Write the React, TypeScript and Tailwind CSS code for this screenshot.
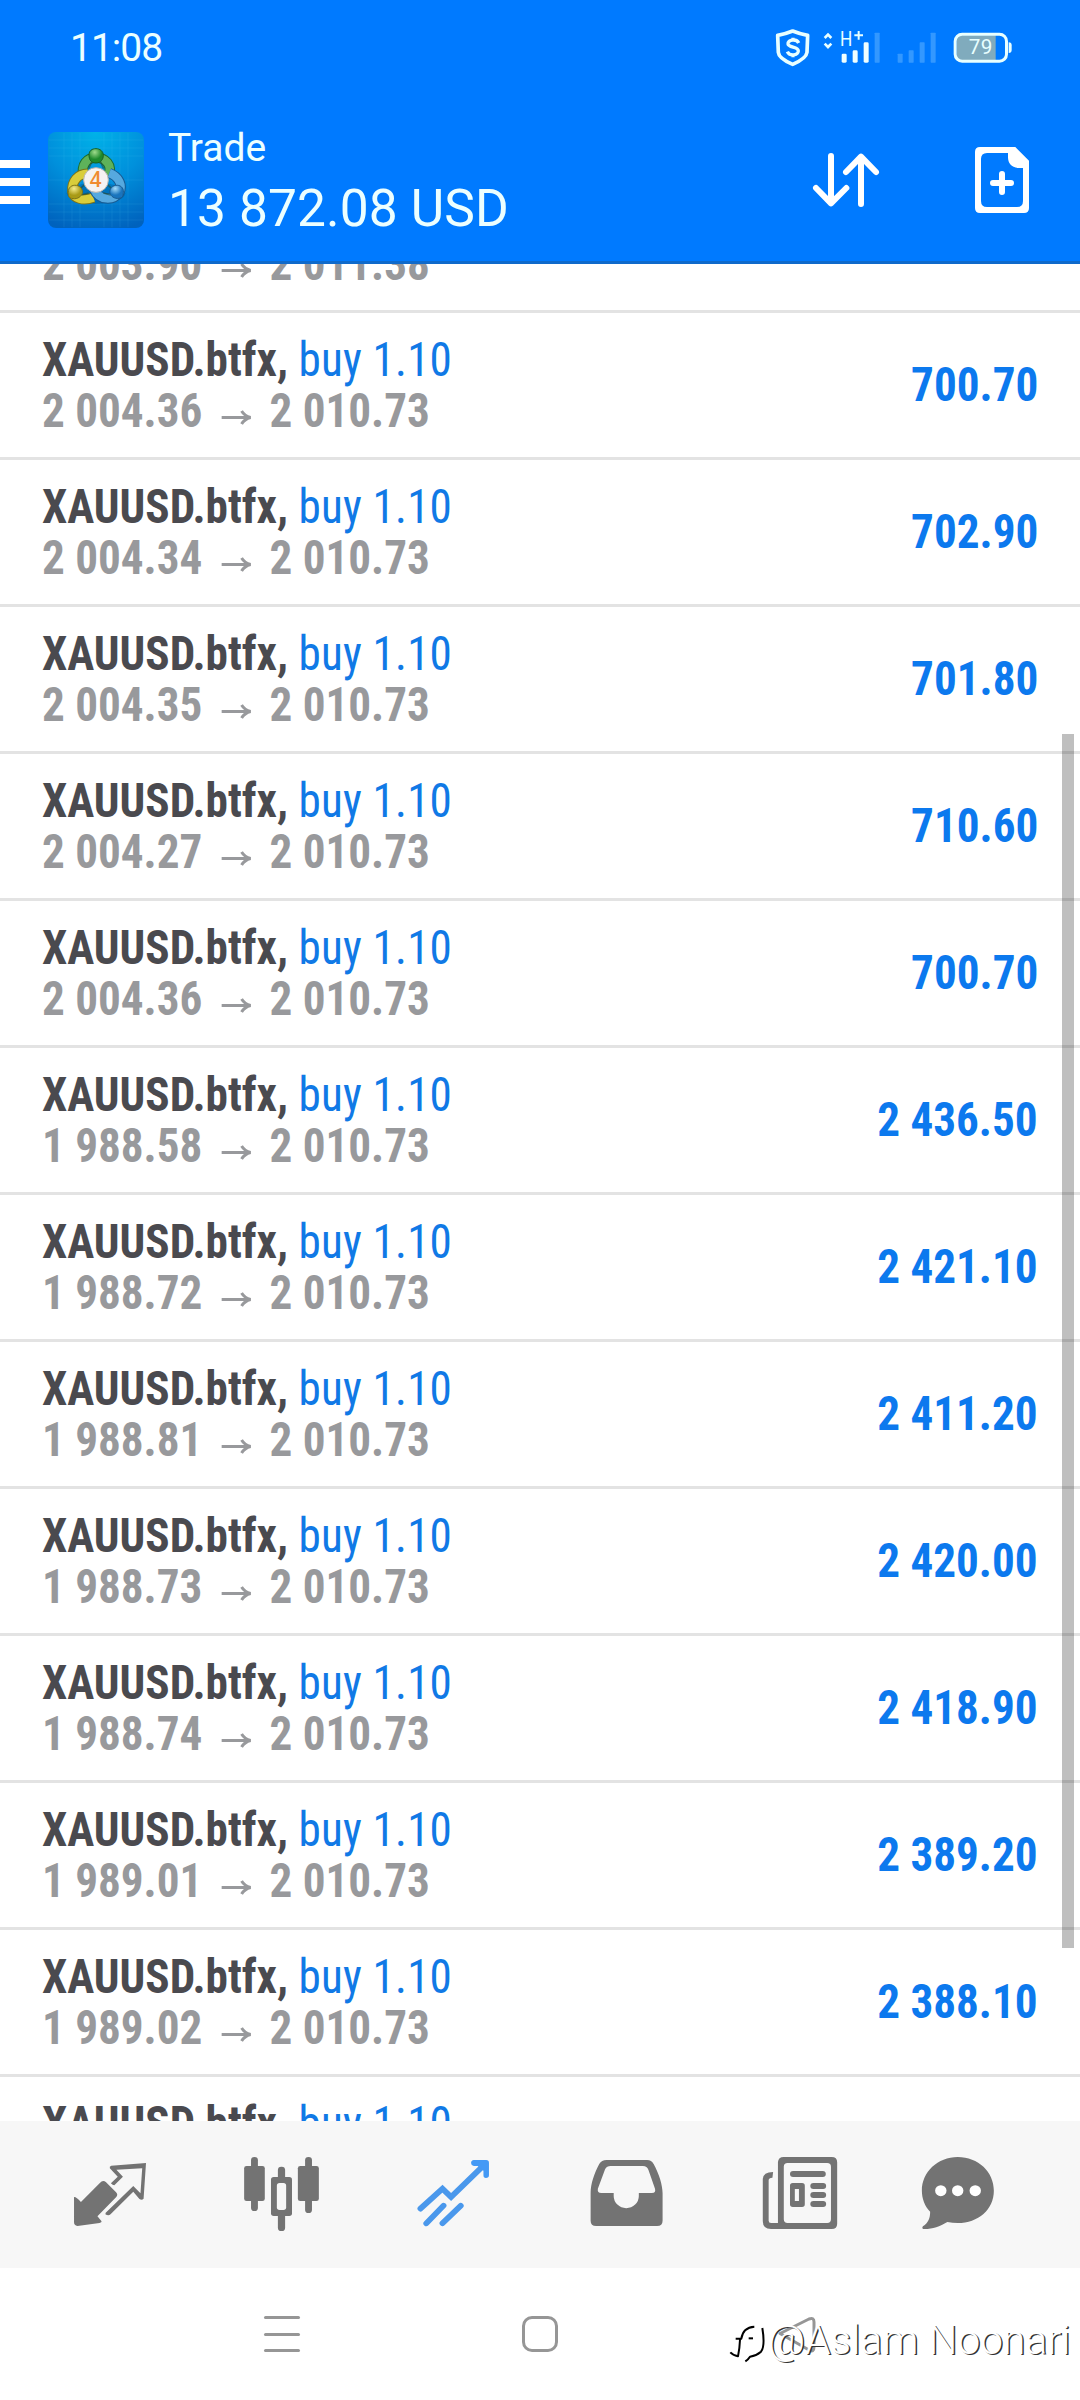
import React from "react";

const trades = [
  ["2 004.36", "700.70"],
  ["2 004.34", "702.90"],
  ["2 004.35", "701.80"],
  ["2 004.27", "710.60"],
  ["2 004.36", "700.70"],
  ["1 988.58", "2 436.50"],
  ["1 988.72", "2 421.10"],
  ["1 988.81", "2 411.20"],
  ["1 988.73", "2 420.00"],
  ["1 988.74", "2 418.90"],
  ["1 989.01", "2 389.20"],
  ["1 989.02", "2 388.10"],
];

function Row({ open, close, profit }: { open?: string; close?: string; profit?: string }) {
  return (
    <div className="flex h-[147px] shrink-0 items-center justify-between border-b-[3px] border-[#e3e3e3] pr-[42px] pl-[42px] font-['Roboto_Condensed',Roboto,sans-serif] text-[48px] whitespace-nowrap">
      <div className="origin-left scale-x-[0.94] leading-[51px]">
        <div className="flex h-[51px]">
          {profit !== undefined && (
            <>
              <span className="w-[273px] font-bold text-[#4a4a4f]">XAUUSD.btfx,</span>
              <span className="tracking-[0.2px] text-[#1079e6]">buy 1.10</span>
            </>
          )}
        </div>
        <div className="flex h-[51px] font-bold text-[#98999c]">
          {open && (
            <>
              <span className="w-[189px]">{open}</span>
              <svg className="mt-[24px] mr-[18px] h-[18px] w-[35px]" viewBox="0 0 33 18" preserveAspectRatio="none" fill="none" stroke="#98999c" strokeWidth="3">
                <path d="M2 8.5h28M22 2q3 5 9 6.500q-6 1.500-9 6.500" />
              </svg>
              <span>{close}</span>
            </>
          )}
        </div>
      </div>
      <div className="origin-right scale-x-[0.94] font-bold text-[#0c79ee]">{profit}</div>
    </div>
  );
}

function Logo() {
  return (
    <svg className="h-[112px] w-[112px] shrink-0" viewBox="0 0 336 336">
      <defs>
        <radialGradient id="tile" cx="50%" cy="0%" r="105%">
          <stop offset="0" stopColor="#00b2e8" />
          <stop offset=".5" stopColor="#0090dc" />
          <stop offset="1" stopColor="#0062bd" />
        </radialGradient>
        <radialGradient id="green" cx="40%" cy="25%"><stop offset="0" stopColor="#9edb8b" /><stop offset="1" stopColor="#1e8a2c" /></radialGradient>
        <radialGradient id="gold" cx="40%" cy="25%"><stop offset="0" stopColor="#f6ec8c" /><stop offset="1" stopColor="#a89a16" /></radialGradient>
        <radialGradient id="azure" cx="40%" cy="25%"><stop offset="0" stopColor="#a5dcfa" /><stop offset="1" stopColor="#1a74bd" /></radialGradient>
      </defs>
      <rect x="24" y="24" width="288" height="288" rx="24" fill="url(#tile)" />
      <path d="M72 26v284M96 26v284M120 26v284M192 26v284M216 26v284M240 26v284M264 26v284M26 48h284M26 72h284M26 96h284M26 168h284M26 240h284M26 264h284M26 288h284" stroke="#5fd0f5" strokeOpacity=".16" strokeWidth="2" />
      <ellipse cx="168" cy="208" rx="88" ry="32" fill="#004a86" opacity=".35" />
      <g fill="none">
        <path d="M131 160C121 120 142 101 168 101S222 122 203 158" stroke="#1c6b2c" strokeWidth="31" />
        <path d="M131 160C121 120 142 101 168 101S222 122 203 158" stroke="#5eb25a" strokeWidth="25" />
        <path d="M143 149C114 149 94 172 97 203C101 223 130 233 160 221" stroke="#7c7418" strokeWidth="31" />
        <path d="M143 149C114 149 94 172 97 203C101 223 130 233 160 221" stroke="#d9cd3b" strokeWidth="25" />
        <path d="M208 147C239 159 248 185 238 205C220 231 178 231 162 196" stroke="#175a91" strokeWidth="31" />
        <path d="M208 147C239 159 248 185 238 205C220 231 178 231 162 196" stroke="#56a9df" strokeWidth="25" />
      </g>
      <path d="M156 112l-10 22M181 112l10 22M118 196l18-16M124 213l22-6M218 196l-18-16M212 213l-22-6" stroke="#234f35" strokeOpacity=".6" strokeWidth="5" />
      <path d="M147 93C147 80 156 74 168 74S190 82 190 94S182 117 168 117S147 108 147 93Z" fill="url(#green)" stroke="#175f25" strokeWidth="3" />
      <path d="M85 205C84 190 96 182 109 184S130 199 127 208S113 226 99 224S85 215 85 205Z" fill="url(#gold)" stroke="#7c7418" strokeWidth="3" />
      <path d="M250 205C252 191 240 182 227 184S207 199 210 208S223 225 237 223S249 214 250 205Z" fill="url(#azure)" stroke="#175a91" strokeWidth="3" />
      <circle cx="168" cy="168" r="37" fill="#f5f2f2" stroke="#bcb6b0" strokeWidth="3" />
      <text x="167" y="189" textAnchor="middle" fill="#f08b30" fontFamily="Open Sans" fontWeight="600" fontSize="62">4</text>
    </svg>
  );
}

function StatusIcons() {
  return (
    <svg className="h-[40px] w-[250px]" viewBox="97 85 750 120" fill="none">
      <path d="M156 94Q178 103 201 107L199 158Q197 176 156 194Q114 176 113 158L111 107Q134 103 156 94Z" stroke="#e8ffff" strokeWidth="11" strokeLinejoin="round" />
      <path d="M174 130C168 116 140 120 142 133C144 145 173 140 173 154C172 168 146 170 140 156M157 114v10M157 164v9" stroke="#e8ffff" strokeWidth="10" />
      <path d="M252 115l10-10 10 10M252 132l10 10 10-10" stroke="#e8ffff" strokeWidth="8" />
      <text x="298" y="140" fill="#e8ffff" fontFamily="Roboto" fontSize="60" textLength="37" lengthAdjust="spacingAndGlyphs">H</text>
      <path d="M341 107h26M354 94v26" stroke="#e8ffff" strokeWidth="6" />
      <g fill="#f0ffff">
        <rect x="303" y="162" width="15" height="27" rx="4" />
        <rect x="336" y="152" width="15" height="37" rx="4" />
        <rect x="369" y="128" width="15" height="61" rx="4" />
      </g>
      <g fill="#3398ff">
        <rect x="402" y="99" width="15" height="90" rx="2" />
        <rect x="471" y="162" width="15" height="27" rx="2" />
        <rect x="504" y="152" width="15" height="37" rx="2" />
        <rect x="537" y="128" width="15" height="61" rx="2" />
        <rect x="570" y="99" width="15" height="90" rx="2" />
      </g>
      <path d="M664 107h101v74H664q-16 0-16-16v-42q0-16 16-16Z" fill="#80abbd" />
      <rect x="643.500" y="103.500" width="154" height="81" rx="21" stroke="#e8ffff" strokeWidth="9" />
      <path d="M804 128q9 0 9 9v14q0 9-9 9z" fill="#e8ffff" />
      <text x="684" y="164" fill="#e8ffff" fontFamily="Roboto" fontSize="62" textLength="71">79</text>
    </svg>
  );
}

function SortIcon() {
  return (
    <svg className="h-[60px] w-[70px]" viewBox="213 450 210 180" fill="none" stroke="#fff" strokeWidth="18" strokeLinecap="round" strokeLinejoin="round">
      <path d="M273 468v142M228 564l45 46 46-46M363 612V470M318 516l45-46 45 46" />
    </svg>
  );
}

function NewOrderIcon() {
  return (
    <svg className="h-[70px] w-[60px]" viewBox="696 435 180 210" fill="none">
      <path fillRule="evenodd" fill="#fff" d="M720 441H826L867 482V624q0 15-15 15H720q-15 0-15-15V456q0-15 15-15ZM804 459H741q-18 0-18 18V603q0 18 18 18h90q18 0 18-18V504H837C815 504 804 490 804 472Z" />
      <path d="M759 549h54M786 522v54" stroke="#fff" strokeWidth="18" strokeLinecap="round" />
    </svg>
  );
}

function Tab({ box, children }: { box: string; children: React.ReactNode }) {
  return (
    <svg className="h-[147px] w-[172px] shrink-0" viewBox={box} preserveAspectRatio="none" fill="#737373">
      {children}
    </svg>
  );
}

function TabBar() {
  return (
    <nav className="flex h-[147px] shrink-0 bg-[#f7f7f7] pl-[24px]">
      <Tab box="69.7 183 499.5 441">
        <path d="M215 411Q220 409 235 426L290 369Q299 358 308 367L337 397Q344 405 337 412L283 469L295 484Q296 488 289 489L225 498Q215 497 215 487Z" />
        <path fillRule="evenodd" d="M424 309L417 416Q412 422 405 417L387 395L321 463Q315 469 306 463L307 458L387 378L408 400L413 325L338 329L357 350L332 376Q327 376 322 370L342 350L319 325Q317 319 323 317Z" />
      </Tab>
      <Tab box="569.2 183 499.5 441">
        <rect x="729" y="291" width="20" height="162" rx="10" />
        <rect x="709" y="318" width="60" height="105" rx="7" />
        <rect x="886" y="291" width="20" height="168" rx="10" />
        <rect x="865" y="318" width="61" height="105" rx="7" />
        <rect x="807" y="320" width="21" height="60" rx="10" />
        <rect x="807" y="440" width="21" height="73" rx="10" />
        <rect x="787" y="351" width="61" height="117" rx="8" />
        <rect x="804" y="369" width="27" height="81" rx="8" fill="#f7f7f7" />
      </Tab>
      <Tab box="1068.700 183 499.5 441">
        <path d="M1221 446L1285 386L1310 411L1405 316M1238 490L1288 437M1285 490L1338 437" fill="none" stroke="#4a98ec" strokeWidth="17" strokeLinecap="round" />
        <path d="M1376 300H1412Q1420 300 1420 308V346Q1420 354 1411 354Q1404 354 1404 346V332L1387 318H1376Q1368 316 1368 309Q1368 301 1376 300Z" fill="#4499f5" />
      </Tab>
      <Tab box="0 183 499.5 441">
        <path fillRule="evenodd" d="M193 300H311Q324 300 330 312C346 342 356 375 356 400V482Q356 498 340 498H163Q147 498 147 482V400C147 370 158 340 172 312Q179 300 193 300ZM205 318Q194 318 189 328L168 386Q166 399 178 399H214V408A36 36 0 0 0 287 408V399H325Q337 399 334 386L315 330Q311 318 299 318Z" />
      </Tab>
      <Tab box="499.500 183 499.5 441">
        <path fillRule="evenodd" d="M708 291H847Q863 291 863 307V491Q863 507 847 507H671Q647 507 647 483V357Q648 336 677 336L675 353Q664 353 664 361V482Q664 489 671 489H691V307Q692 291 708 291ZM719 309Q708 309 708 320V478Q708 489 719 489H834Q845 489 845 478V320Q845 309 834 309Z" />
        <rect x="726" y="333" width="104" height="18" rx="9" />
        <path fillRule="evenodd" d="M734 369H761Q769 369 769 377V433Q769 441 761 441H734Q726 441 726 433V377Q726 369 734 369ZM740 387V423H752V387Z" />
        <rect x="785" y="369" width="46" height="18" rx="9" />
        <rect x="785" y="396" width="46" height="18" rx="9" />
        <rect x="785" y="423" width="46" height="18" rx="9" />
      </Tab>
      <Tab box="999 183 499.5 441">
        <path d="M1213 291C1273 291 1318 336 1318 392C1318 448 1273 489 1213 489Q1198 489 1183 486C1160 500 1138 508 1113 507Q1108 505 1112 499C1128 488 1133 474 1133 455C1117 438 1109 415 1109 392C1109 336 1155 291 1213 291Z" />
        <g fill="#fff">
          <circle cx="1164" cy="392" r="16.500" />
          <circle cx="1213" cy="392" r="16.500" />
          <circle cx="1264" cy="392" r="16.500" />
        </g>
      </Tab>
    </nav>
  );
}

function SystemBar() {
  return (
    <footer className="relative flex h-[132px] shrink-0 items-start bg-white pt-[48px]">
      <div className="ml-[264px] flex h-[36px] w-[36px] flex-col justify-between">
        <div className="h-[3px] rounded-full bg-[#969696]" />
        <div className="h-[3px] rounded-full bg-[#969696]" />
        <div className="h-[3px] rounded-full bg-[#969696]" />
      </div>
      <div className="ml-[222px] h-[36px] w-[36px] rounded-[10px] border-[3px] border-[#969696]" />
      <svg className="ml-[217px] h-[40px] w-[42px]" viewBox="0 0 42 40" fill="none" stroke="#969696" strokeWidth="3" strokeLinejoin="round">
        <path d="M5 17.500L34 3Q39 1 39 6V31Q39 37 34 34Z" />
      </svg>
      <div className="absolute top-[55px] left-[728px] flex items-start">
        <svg className="h-[44px] w-[42px]" viewBox="84 165 126 132" fill="none" strokeLinecap="butt" strokeLinejoin="round">
          <path d="M107 212h17q5-34 39-36M120 215q-1 26-6 50q-16-4-23-12" stroke="#000" strokeWidth="6" />
          <path d="M146 211h13" stroke="#000" strokeWidth="6" />
          <path d="M187 180q9 55-4 71q-14 12-33 15q-5 8-14 14" stroke="#000" strokeWidth="6" />
        </svg>
        <span className="-mt-[7px] -ml-[2px] font-[Roboto] text-[40.5px] leading-[48px] font-light tracking-[0.15px] whitespace-nowrap text-white [text-shadow:1.5px_1px_0.5px_#333]">@Aslam Noonari</span>
      </div>
    </footer>
  );
}

export default function App() {
  return (
    <div className="flex h-[2400px] w-[1080px] flex-col overflow-hidden bg-white font-[Roboto,sans-serif]">
      <header className="h-[264px] shrink-0 border-b-[3px] border-[#0f6acb] bg-[#007aff] text-[#ecffff]">
        <div className="flex h-[96px] items-center justify-between pl-[70px]">
          <span className="font-[Roboto] text-[39px] tracking-[-1px]">11:08</span>
          <div className="pr-[57px]"><StatusIcons /></div>
        </div>
        <div className="flex items-start">
          <div className="mt-[64px] flex w-[30px] flex-col gap-[10px]">
            <div className="h-[8px] bg-white" />
            <div className="h-[8px] bg-white" />
            <div className="h-[8px] bg-white" />
          </div>
          <div className="mt-[28px] ml-[10px]"><Logo /></div>
          <div className="mt-[27px] ml-[16px] whitespace-nowrap">
            <div className="text-[39px] leading-[50px]">Trade</div>
            <div className="text-[51.5px] leading-[72px] tracking-[0.1px]">13 872.08 USD</div>
          </div>
          <div className="mt-[49px] ml-auto flex items-center pr-[48px]">
            <SortIcon />
            <div className="ml-[91px]"><NewOrderIcon /></div>
          </div>
        </div>
      </header>
      <main className="relative h-[1857px] shrink-0 overflow-hidden">
        <div className="-mt-[98px] flex flex-col">
          <Row open="2 003.90" close="2 011.38" />
          {trades.map(([open, profit], i) => (
            <Row key={i} open={open} close="2 010.73" profit={profit} />
          ))}
          <Row profit="" />
        </div>
        <div className="absolute top-[470px] left-[1062px] h-[1214px] w-[12px] bg-black/25" />
      </main>
      <TabBar />
      <SystemBar />
    </div>
  );
}
